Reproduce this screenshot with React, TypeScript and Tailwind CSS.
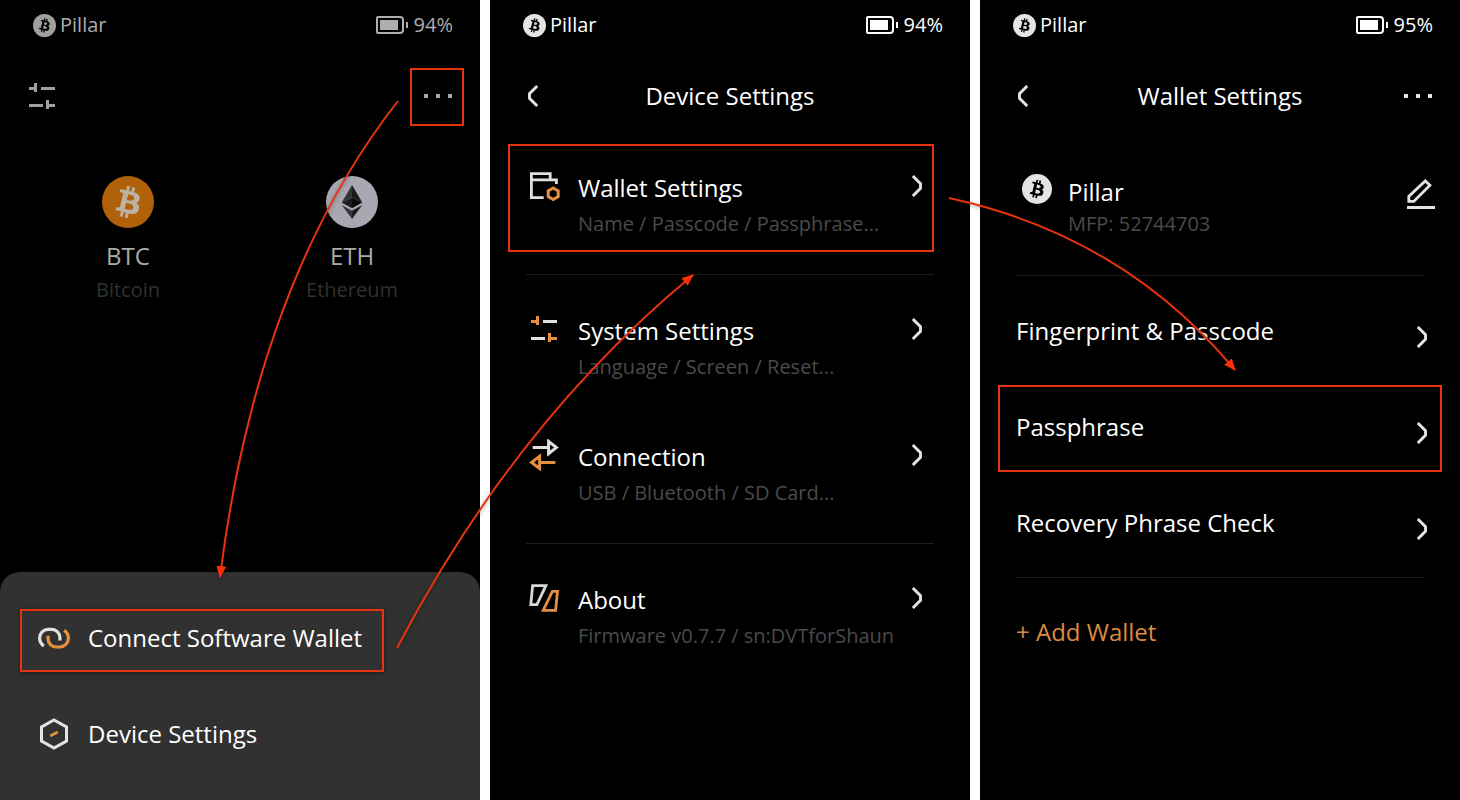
import type { ReactNode } from "react";

const BITCOIN_GLYPH =
  "M23.189 14.02c.314-2.096-1.283-3.223-3.465-3.975l.708-2.84-1.728-.43-.69 2.765c-.454-.114-.92-.22-1.385-.326l.695-2.783L15.596 6l-.708 2.839c-.376-.086-.746-.17-1.104-.26l.002-.009-2.384-.595-.46 1.846s1.283.294 1.256.312c.7.175.826.638.805 1.006l-.806 3.235c.048.012.11.03.18.057l-.183-.045-1.13 4.532c-.086.212-.303.531-.793.41.018.025-1.256-.313-1.256-.313l-.858 1.978 2.25.561c.418.105.828.215 1.231.318l-.715 2.872 1.727.43.708-2.84c.472.127.93.245 1.378.357l-.706 2.828 1.728.43.715-2.866c2.948.558 5.164.333 6.097-2.333.752-2.146-.037-3.385-1.588-4.192 1.13-.26 1.98-1.003 2.207-2.538zm-3.95 5.538c-.533 2.147-4.148.986-5.32.695l.95-3.805c1.172.293 4.929.872 4.37 3.11zm.535-5.569c-.487 1.953-3.495.96-4.47.717l.86-3.45c.975.243 4.118.696 3.61 2.733z";

function BitcoinBadge({ className, disc = "currentColor", glyph = "#000" }: { className: string; disc?: string; glyph?: string }) {
  return (
    <svg viewBox="0 0 32 32" className={className} aria-hidden="true">
      <circle cx="16" cy="16" r="16" fill={disc} />
      <path d={BITCOIN_GLYPH} fill={glyph} fillRule="evenodd" />
    </svg>
  );
}

function EthereumBadge({ className }: { className: string }) {
  return (
    <svg viewBox="0 0 52 52" className={className} aria-hidden="true">
      <circle cx="26" cy="26" r="26" fill="#a8a8b2" />
      <path d="M26 9 15.7 26.5 26 21.8Z" fill="#343436" />
      <path d="M26 9 36.3 26.5 26 21.8Z" fill="#1c1c1e" />
      <path d="M15.7 26.5 26 21.8V32.3Z" fill="#1c1c1e" />
      <path d="M36.3 26.5 26 21.8V32.3Z" fill="#0b0b0d" />
      <path d="M15.7 29 26 34.8V43Z" fill="#39393c" />
      <path d="M36.3 29 26 34.8V43Z" fill="#1e1e20" />
    </svg>
  );
}

function BatteryIcon() {
  return (
    <svg viewBox="0 0 32 18" className="h-[18px] w-8" aria-hidden="true">
      <path d="M2 1H24Q27 1 27 4V14Q27 17 24 17H2Q1 17 1 16V2Q1 1 2 1Z" fill="none" stroke="currentColor" strokeWidth="2" />
      <rect x="4" y="4" width="18" height="10" fill="currentColor" />
      <rect x="30" y="6" width="2" height="6" fill="currentColor" />
    </svg>
  );
}

function Chevron({ back = false }: { back?: boolean }) {
  return (
    <svg viewBox="0 0 10 22" className={back ? "h-[22px] w-[10px] rotate-180" : "h-[22px] w-[10px] shrink-0"} aria-hidden="true">
      <path d="M.8 1 8.5 8.6V13.4L.8 21" fill="none" stroke="#e2e4e2" strokeWidth="2.9" />
    </svg>
  );
}

function Icon({ children }: { children: ReactNode }) {
  return (
    <svg viewBox="0 0 32 32" className="size-8 shrink-0" fill="none" aria-hidden="true">
      {children}
    </svg>
  );
}

function SlidersIcon({ line, knob }: { line: string; knob: string }) {
  return (
    <Icon>
      <path d="M3 7H8V3H11V12H8V10H3Z" fill={knob} />
      <rect x="15" y="7" width="14" height="3" fill={line} />
      <rect x="3" y="24" width="14" height="3" fill={line} />
      <path d="M29 27H23V29H20V20H23V24H29Z" fill={knob} />
    </Icon>
  );
}

function LinkIcon() {
  const arc = "M5.9 24A9.6 9.6 0 0 1 1.6 16A8.6 8.6 0 0 1 10.2 7.4H13.8A8.1 8.1 0 0 1 21.9 15.5V18.6";
  return (
    <Icon>
      <path d={arc} stroke="#dfe1df" strokeWidth="3.2" />
      <path d={arc} stroke="#e6923c" strokeWidth="3.2" transform="rotate(180 16 16.2)" />
    </Icon>
  );
}

function HexagonIcon() {
  return (
    <Icon>
      <path d="M16 2 28.5 9V23L16 30 3.5 23V9Z" stroke="#e2e4e2" strokeWidth="3" />
      <path d="M12.2 17.9 19.8 14" stroke="#e6923c" strokeWidth="2.8" />
    </Icon>
  );
}

function WalletIcon() {
  return (
    <Icon>
      <path d="M15.7 27.7H3.4V3.6H22.2V9.8M3.4 9.8H28.4V14" stroke="#dfe1df" strokeWidth="2.8" />
      <path d="M25.2 18 30.2 20.9V26.6L25.2 29.5 20.2 26.6V20.9Z" stroke="#e58f43" strokeWidth="3" />
    </Icon>
  );
}

function TransferIcon() {
  return (
    <Icon>
      <path d="M4.7 8.5H20M20.6 2.4V14.6L28.4 8.5Z" stroke="#dfe1df" strokeWidth="3" />
      <path d="M27.3 23.4H12M11.6 17.3V29.5L3.6 23.4Z" stroke="#e58f43" strokeWidth="3" />
    </Icon>
  );
}

function AboutIcon() {
  return (
    <Icon>
      <path d="M4.6 3.7H17.9L8.9 22.6H2.8Z" stroke="#d6dad6" strokeWidth="2.8" />
      <path d="M24.4 9.4H29.5L27.6 28.3H15.2Z" stroke="#e58f43" strokeWidth="2.8" />
    </Icon>
  );
}

function PencilIcon() {
  return (
    <svg viewBox="0 0 28 30" className="h-[30px] w-7" aria-hidden="true">
      <path d="M1.8 22.4V17.4L18.3 1.9 22.9 6.3 6.8 22.4Z" fill="none" stroke="#e2e4e2" strokeWidth="2.8" />
      <rect y="27" width="28" height="3" fill="#e2e4e2" />
    </svg>
  );
}

function Highlight({ className }: { className: string }) {
  return <span className={`pointer-events-none absolute border-2 border-[#e63411] ${className}`} />;
}

function StatusBar({ battery, dim = false }: { battery: string; dim?: boolean }) {
  return (
    <div className={`flex h-12 items-center justify-between pt-0.5 pr-[27px] pl-[33px] text-xl leading-7 ${dim ? "text-[#aeaeae]" : "text-white"}`}>
      <div className="flex items-center gap-1">
        <BitcoinBadge className="size-[23px]" disc={dim ? "#9da19d" : "#e2e5e2"} />
        <span>Pillar</span>
      </div>
      <div className="flex items-center gap-1.5">
        <BatteryIcon />
        <span>{battery}</span>
      </div>
    </div>
  );
}

function MoreButton({ dim = false, children }: { dim?: boolean; children?: ReactNode }) {
  const dot = dim ? "size-1 bg-[#a6a9a6]" : "size-1 bg-[#e2e4e2]";
  return (
    <button type="button" aria-label="More" className="relative flex h-14 w-[54px] items-center justify-center gap-2 pl-0.5">
      <span className={dot} />
      <span className={dot} />
      <span className={dot} />
      {children}
    </button>
  );
}

function NavBar({ title, action }: { title: string; action?: ReactNode }) {
  return (
    <header className="grid h-24 grid-cols-[1fr_auto_1fr] items-center pr-4 pl-[38px]">
      <button type="button" aria-label="Back" className="justify-self-start">
        <Chevron back />
      </button>
      <h1 className="-ml-[22px] text-2xl leading-8">{title}</h1>
      <div className="justify-self-end">{action}</div>
    </header>
  );
}

function Coin({ icon, symbol, name }: { icon: ReactNode; symbol: string; name: string }) {
  return (
    <div className="flex flex-col items-center">
      {icon}
      <span className="mt-3 text-2xl leading-8 text-[#a9aba9]">{symbol}</span>
      <span className="mt-1 text-xl leading-7 text-[#303230]">{name}</span>
    </div>
  );
}

function SheetItem({ icon, label, highlighted = false }: { icon: ReactNode; label: string; highlighted?: boolean }) {
  return (
    <button type="button" className="flex h-24 items-center px-[38px] text-left">
      <span className="relative flex items-center gap-[18px]">
        {icon}
        <span className="text-2xl leading-8">{label}</span>
        {highlighted && <Highlight className="-top-[13px] -right-[22px] -bottom-[18px] -left-[18px] shadow-[0_1px_4px_rgba(0,0,0,0.5)]" />}
      </span>
    </button>
  );
}

function SettingsRow({ icon, title, detail, highlighted = false }: { icon: ReactNode; title: string; detail: string; highlighted?: boolean }) {
  return (
    <button type="button" className="relative flex h-[126px] w-full items-start gap-[18px] pt-[26px] pr-12 pl-[38px] text-left">
      {icon}
      <span className="flex min-w-0 grow basis-0 flex-col gap-1.5 pt-0.5">
        <span className="text-2xl leading-8">{title}</span>
        <span className="text-xl leading-7 whitespace-nowrap text-[#4a4a4a]">{detail}</span>
      </span>
      <span className="flex h-8 items-center">
        <Chevron />
      </span>
      {highlighted && <Highlight className="top-0 right-9 bottom-[18px] left-[18px]" />}
    </button>
  );
}

function WalletRow({ label, highlighted = false }: { label: string; highlighted?: boolean }) {
  return (
    <button type="button" className="relative flex h-24 w-full items-center justify-between pr-[33px] pl-9 text-left">
      <span className="text-2xl leading-8">{label}</span>
      <span className="pt-3">
        <Chevron />
      </span>
      {highlighted && <Highlight className="top-1.5 right-[18px] bottom-[3px] left-[18px]" />}
    </button>
  );
}

function Arrows() {
  return (
    <svg viewBox="0 0 1460 800" className="pointer-events-none absolute inset-x-0 top-0 w-full" fill="none" aria-hidden="true">
      <defs>
        <marker id="head" viewBox="0 0 12 10" refX="11" refY="5" markerWidth="12" markerHeight="10" markerUnits="userSpaceOnUse" orient="auto">
          <path d="M0 0 12 5 0 10Z" fill="#fb2f05" />
        </marker>
      </defs>
      <g stroke="#e8330f" strokeWidth="2" className="drop-shadow-[0_1px_2px_rgba(0,0,0,0.4)]">
        <path d="M398 101Q257 281 220 577" markerEnd="url(#head)" />
        <path d="M397 648Q515 422 693 275" markerEnd="url(#head)" />
        <path d="M949 198Q1124 236 1235 370" markerEnd="url(#head)" />
      </g>
    </svg>
  );
}

export default function App() {
  return (
    <main className="relative grid min-h-screen grid-cols-3 gap-[10px] bg-white font-['Open_Sans',sans-serif] text-white">
      <section className="flex flex-col bg-black">
        <StatusBar battery="94%" dim />
        <header className="flex h-24 items-center justify-between pr-4 pl-[26px]">
          <button type="button" aria-label="Settings">
            <SlidersIcon line="#9da19d" knob="#9da19d" />
          </button>
          <MoreButton dim>
            <Highlight className="inset-x-0 top-0 -bottom-0.5" />
          </MoreButton>
        </header>
        <div className="grid grid-cols-2 px-4 pt-8">
          <Coin icon={<BitcoinBadge className="size-[52px]" disc="#b1610a" glyph="#bcb2a4" />} symbol="BTC" name="Bitcoin" />
          <Coin icon={<EthereumBadge className="size-[52px]" />} symbol="ETH" name="Ethereum" />
        </div>
        <div className="mt-auto flex flex-col rounded-t-[20px] bg-[#313131] py-[18px]">
          <SheetItem icon={<LinkIcon />} label="Connect Software Wallet" highlighted />
          <SheetItem icon={<HexagonIcon />} label="Device Settings" />
        </div>
      </section>

      <section className="bg-black">
        <StatusBar battery="94%" />
        <NavBar title="Device Settings" />
        <SettingsRow icon={<WalletIcon />} title="Wallet Settings" detail="Name / Passcode / Passphrase..." highlighted />
        <hr className="mx-9 mt-1 mb-3 border-[#1c1c1c]" />
        <SettingsRow icon={<SlidersIcon line="#dfe1df" knob="#e58f43" />} title="System Settings" detail="Language / Screen / Reset..." />
        <SettingsRow icon={<TransferIcon />} title="Connection" detail="USB / Bluetooth / SD Card..." />
        <hr className="mx-9 mt-1 mb-3 border-[#1c1c1c]" />
        <SettingsRow icon={<AboutIcon />} title="About" detail="Firmware v0.7.7 / sn:DVTforShaun" />
      </section>

      <section className="bg-black">
        <StatusBar battery="95%" />
        <NavBar title="Wallet Settings" action={<MoreButton />} />
        <div className="flex h-[127px] items-start gap-4 pt-[30px] pr-[25px] pl-[42px]">
          <BitcoinBadge className="size-[30px]" disc="#e2e5e2" />
          <div className="flex grow flex-col gap-0.5 pt-0.5">
            <span className="text-2xl leading-8">Pillar</span>
            <span className="text-xl leading-7 text-[#4a4a4a]">MFP: 52744703</span>
          </div>
          <button type="button" aria-label="Edit name" className="pt-[5px]">
            <PencilIcon />
          </button>
        </div>
        <hr className="mx-9 mt-1 mb-[7px] border-[#1c1c1c]" />
        <WalletRow label="Fingerprint &amp; Passcode" />
        <WalletRow label="Passphrase" highlighted />
        <WalletRow label="Recovery Phrase Check" />
        <hr className="mx-9 mt-1.5 border-[#1c1c1c]" />
        <button type="button" className="px-9 pt-[38px] text-2xl leading-8 text-[#dd8a45]">
          + Add Wallet
        </button>
      </section>

      <Arrows />
    </main>
  );
}
